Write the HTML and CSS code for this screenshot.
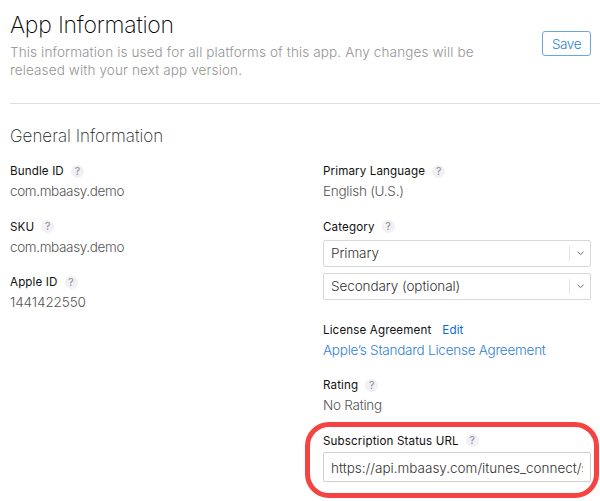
FILE: index.html
```html
<!DOCTYPE html>
<html lang="en">
<head>
<meta charset="utf-8">
<title>App Information</title>
<link rel="stylesheet" href="styles.css">
</head>
<body>
<header class="page-header">
  <div class="intro">
    <h1 class="title">App Information</h1>
    <p class="description">This information is used for all platforms of this app. Any changes will be<br>released with your next app version.</p>
  </div>
  <button class="save">Save</button>
</header>
<main>
  <h2 class="section-title">General Information</h2>
  <div class="columns">
    <div class="column">
      <div class="field">
        <div class="label"><span>Bundle ID</span><span class="help">?</span></div>
        <div class="value identifier">com.mbaasy.demo</div>
      </div>
      <div class="field">
        <div class="label"><span>SKU</span><span class="help">?</span></div>
        <div class="value identifier">com.mbaasy.demo</div>
      </div>
      <div class="field">
        <div class="label"><span>Apple ID</span><span class="help">?</span></div>
        <div class="value digits">1441422550</div>
      </div>
    </div>
    <div class="column">
      <div class="field">
        <div class="label"><span>Primary Language</span><span class="help">?</span></div>
        <div class="value">English (U.S.)</div>
      </div>
      <div class="field category">
        <div class="label"><span>Category</span><span class="help">?</span></div>
        <div class="select"><span>Primary</span><span class="arrow"><svg width="7" height="5" viewBox="0 0 7 5"><path d="M.5 .8 3.5 3.6 6.5 .8"/></svg></span></div>
        <div class="select"><span>Secondary (optional)</span><span class="arrow"><svg width="7" height="5" viewBox="0 0 7 5"><path d="M.5 .8 3.5 3.6 6.5 .8"/></svg></span></div>
      </div>
      <div class="field">
        <div class="label"><span>License Agreement</span><a class="edit">Edit</a></div>
        <div class="value"><a class="license">Apple’s Standard License Agreement</a></div>
      </div>
      <div class="field">
        <div class="label"><span>Rating</span><span class="help">?</span></div>
        <div class="value">No Rating</div>
      </div>
      <div class="field highlighted">
        <div class="label"><span>Subscription Status URL</span><span class="help">?</span></div>
        <div class="input"><span class="url">https://api.mbaasy.com/itunes_connect/subscriptions</span></div>
      </div>
    </div>
  </div>
</main>
</body>
</html>
```
FILE: styles.css
```css
* { box-sizing: border-box; }
body {
  margin: 0;
  height: 501px;
  overflow: hidden;
  background: #fff;
  color: #333;
  font-family: Inter, "Liberation Sans", sans-serif;
  font-size: 13.5px;
  font-weight: 300;
}
h1, h2, p { margin: 0; font-weight: 200; }
.page-header {
  display: flex;
  justify-content: space-between;
  height: 104px;
  margin-left: 10px;
  padding: 10px 9px 0 0;
  border-bottom: 1px solid #dedede;
}
.title {
  font-size: 23px;
  line-height: 31px;
  letter-spacing: -0.22px;
  color: #000;
}
.description {
  margin-top: 2px;
  font-size: 13.5px;
  font-weight: 300;
  line-height: 18px;
  letter-spacing: 0.13px;
  color: #949494;
  white-space: nowrap;
}
.save {
  width: 49px;
  height: 25px;
  margin-top: 21px;
  padding: 0;
  border: 1px solid #6aa6e0;
  border-radius: 3px;
  background: #fff;
  color: #2f7fd3;
  font: inherit;
  letter-spacing: -0.4px;
}
.section-title {
  margin: 20px 0 0 10px;
  font-size: 17px;
  line-height: 24px;
  color: #222;
}
.columns {
  display: grid;
  grid-template-columns: 313px 268px;
  margin: 13px 0 0 10px;
}
.field { height: 55.5px; }
.label {
  display: flex;
  align-items: center;
  height: 20px;
  font-size: 11.6px;
  font-weight: 400;
  letter-spacing: 0.13px;
  color: #111;
}
.help {
  width: 13px;
  height: 13px;
  margin-left: 7px;
  border-radius: 50%;
  background: #f0f0f5;
  color: #8a8a92;
  font-size: 10.5px;
  font-weight: 400;
  line-height: 13px;
  letter-spacing: 0;
  text-align: center;
}
.edit { margin-left: 11px; color: #0a6bd0; }
.value {
  line-height: 20px;
  letter-spacing: -0.25px;
  color: #555;
  white-space: nowrap;
}
.identifier { letter-spacing: -0.36px; }
.digits { letter-spacing: -0.1px; }
.license { color: #2f7fd3; letter-spacing: -0.24px; }
.category { height: 103px; }
.select {
  display: flex;
  align-items: center;
  justify-content: space-between;
  height: 27px;
  margin-top: 6px;
  padding-left: 7px;
  border: 1px solid #d8d8d8;
  border-radius: 2px;
  letter-spacing: -0.08px;
}
.label + .select { margin-top: 3px; }
.arrow {
  display: flex;
  align-items: center;
  justify-content: center;
  width: 21px;
  height: 15px;
  border-left: 1px solid #e3e3e3;
}
.arrow path { fill: none; stroke: #666; stroke-width: 1; }
.highlighted {
  width: 294px;
  height: 76px;
  margin: -9px 0 0 -18px;
  padding: 4px 3px 0 13px;
  border: 5px solid #f44340;
  border-radius: 24px;
}
.input {
  width: 268px;
  height: 30px;
  margin-top: 1px;
  padding: 0 7px;
  border: 1px solid #d0d0d0;
  border-radius: 2px;
  line-height: 30px;
}
.url { display: block; overflow: hidden; white-space: nowrap; }
```
